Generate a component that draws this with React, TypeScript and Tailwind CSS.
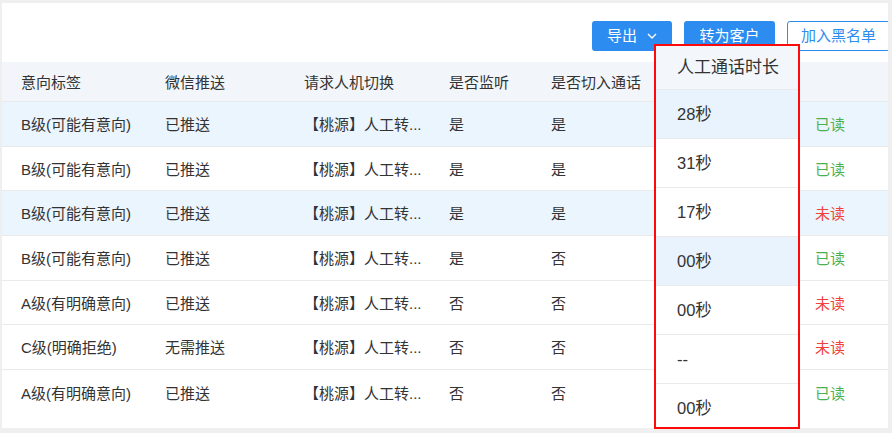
import React from 'react';

interface Row {
	intent: string;
	wechat: string;
	handoff: string;
	monitor: string;
	joined: string;
	duration: string;
	read: boolean;
	active?: boolean;
}

const rows: Row[] = [
	{ intent: 'B级(可能有意向)', wechat: '已推送', handoff: '【桃源】人工转...', monitor: '是', joined: '是', duration: '28秒', read: true, active: true },
	{ intent: 'B级(可能有意向)', wechat: '已推送', handoff: '【桃源】人工转...', monitor: '是', joined: '是', duration: '31秒', read: true },
	{ intent: 'B级(可能有意向)', wechat: '已推送', handoff: '【桃源】人工转...', monitor: '是', joined: '是', duration: '17秒', read: false, active: true },
	{ intent: 'B级(可能有意向)', wechat: '已推送', handoff: '【桃源】人工转...', monitor: '是', joined: '否', duration: '00秒', read: true },
	{ intent: 'A级(有明确意向)', wechat: '已推送', handoff: '【桃源】人工转...', monitor: '否', joined: '否', duration: '00秒', read: false },
	{ intent: 'C级(明确拒绝)', wechat: '无需推送', handoff: '【桃源】人工转...', monitor: '否', joined: '否', duration: '--', read: false },
	{ intent: 'A级(有明确意向)', wechat: '已推送', handoff: '【桃源】人工转...', monitor: '否', joined: '否', duration: '00秒', read: true },
];

// popup highlights differ from the table underneath
const popupActive = [true, false, false, true, false, false, false];

const cols = 'grid grid-cols-[144px_139px_145px_102px_120px_144px_1fr]';

export default function App() {
	return (
		<div className="relative w-[892px] h-[433px] bg-[#efefef] pt-[3px] pl-[2px] pr-[4px] pb-[5px] font-['Liberation_Sans','Noto_Sans_CJK_SC',sans-serif] text-[15px] text-[#333]">
			<div className="h-full bg-white overflow-hidden">
				{/* Toolbar */}
				<div className="flex justify-end items-center gap-3 pt-[18px] h-[48px] mr-[-2px]">
					<button className="h-[30px] w-[80px] rounded-[3px] bg-[#2d8cf0] text-white flex items-center justify-center gap-[10px]">
						<span>导出</span>
						<svg width="10" height="6" viewBox="0 0 10 6" fill="none">
							<path d="M1 1l4 4 4-4" stroke="white" strokeWidth="1.4" />
						</svg>
					</button>
					<button className="h-[30px] w-[91px] rounded-[3px] bg-[#2d8cf0] text-white">转为客户</button>
					<button className="h-[30px] w-[103px] rounded-[3px] border border-[#2d8cf0] text-[#2d8cf0] bg-white">加入黑名单</button>
				</div>

				{/* Table */}
				<div className="mt-[11px]">
					<div className={`${cols} h-[40px] items-center bg-[#f2f6fa] border-b border-[#e8eaec] pt-[4px]`}>
						<div className="pl-[19px]">意向标签</div>
						<div className="pl-[19px]">微信推送</div>
						<div className="pl-[19px]">请求人机切换</div>
						<div className="pl-[19px]">是否监听</div>
						<div className="pl-[19px]">是否切入通话</div>
						<div></div>
						<div></div>
					</div>
					{rows.map((r, i) => (
						<div
							key={i}
							className={`${cols} h-[44.66px] items-center pt-[3px] ${i < rows.length - 1 ? 'border-b border-[#e8eaec]' : ''} ${r.active ? 'bg-[#ebf5fe]' : 'bg-white'}`}
						>
							<div className="pl-[19px] whitespace-nowrap">{r.intent}</div>
							<div className="pl-[19px]">{r.wechat}</div>
							<div className="pl-[19px] whitespace-nowrap">{r.handoff}</div>
							<div className="pl-[19px]">{r.monitor}</div>
							<div className="pl-[19px]">{r.joined}</div>
							<div></div>
							<div className={`pl-[19px] ${r.read ? 'text-[#4cb050]' : 'text-[#f0413a]'}`}>{r.read ? '已读' : '未读'}</div>
						</div>
					))}
				</div>
			</div>

			{/* Highlighted column callout */}
			<div className="absolute left-[654px] top-[44px] w-[146px] h-[385px] border-2 border-[#ff0a0a] bg-white overflow-hidden text-[16.5px] text-[#333]">
				<div className="h-[43px] flex items-center pl-[21px] bg-[#f3f7fb] text-[17px]">人工通话时长</div>
				{rows.map((r, i) => (
					<div
						key={i}
						className={`h-[49px] flex items-center pl-[21px] border-t border-[#e8eaec] ${popupActive[i] ? 'bg-[#e9f3fd]' : 'bg-white'}`}
					>
						{r.duration}
					</div>
				))}
			</div>
		</div>
	);
}
